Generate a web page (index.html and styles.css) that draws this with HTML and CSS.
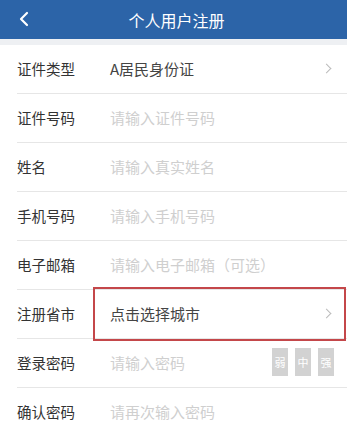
FILE: index.html
```html
<!DOCTYPE html>
<html lang="zh">
<head>
<meta charset="utf-8">
<link rel="stylesheet" href="styles.css">
</head>
<body>
<header class="bar">
  <svg class="back" width="12" height="16" viewBox="0 0 12 16"><path d="M9 2 L3 8 L9 14" fill="none" stroke="#fff" stroke-width="2.2" stroke-linecap="round" stroke-linejoin="round"/></svg>
  <h1 class="title">个人用户注册</h1>
</header>
<div class="strip"></div>
<main class="form">
  <div class="row"><span class="label">证件类型</span><span class="value">A居民身份证</span><span class="chev"></span></div>
  <div class="row"><span class="label">证件号码</span><span class="ph">请输入证件号码</span></div>
  <div class="row"><span class="label">姓名</span><span class="ph">请输入真实姓名</span></div>
  <div class="row"><span class="label">手机号码</span><span class="ph">请输入手机号码</span></div>
  <div class="row"><span class="label">电子邮箱</span><span class="ph">请输入电子邮箱（可选）</span></div>
  <div class="row"><span class="label">注册省市</span><span class="value">点击选择城市</span><span class="chev"></span><span class="mark"></span></div>
  <div class="row"><span class="label">登录密码</span><span class="ph">请输入密码</span><span class="lvls"><span class="lvl">弱</span><span class="lvl">中</span><span class="lvl">强</span></span></div>
  <div class="row"><span class="label">确认密码</span><span class="ph">请再次输入密码</span></div>
</main>
</body>
</html>
```
FILE: styles.css
```css
* { box-sizing: border-box; }
html, body { margin: 0; padding: 0; background: #fff; }
body {
  font-family: "Noto Sans CJK SC", "Noto Sans", sans-serif;
  width: 347px; height: 426px; overflow: hidden;
}
.bar {
  height: 39px; background: #2c64a8;
  display: flex; align-items: center; justify-content: center;
  position: relative;
}
.back { position: absolute; left: 18px; top: 11px; }
.title { margin: 0 0 0 6px; font-size: 16px; font-weight: 400; color: #fff; line-height: 1; }
.strip { height: 6px; background: #eef0f3; }
.form { padding-left: 17px; }
.row {
  height: 49px; border-bottom: 1px solid #e6e6e6;
  display: flex; align-items: center; position: relative;
  padding-bottom: 2px;
}
.label { width: 93px; font-size: 14.5px; color: #333; flex: none; }
.value { font-size: 15px; color: #444; flex: 1; }
.ph { font-size: 15px; color: #cfcfcf; flex: 1; }
.chev {
  width: 7px; height: 7px; border-top: 1.5px solid #bbb; border-right: 1.5px solid #bbb;
  transform: rotate(45deg); margin-right: 17px; flex: none;
}
.mark {
  position: absolute; left: 76px; right: 1px; top: -3px; bottom: -3px;
  border: 2.5px solid #c4474a; pointer-events: none;
}
.lvls { display: flex; gap: 7px; margin-right: 13px; }
.lvl {
  width: 16px; height: 28px; background: #d2d2d2; color: #fff;
  font-size: 11px; display: flex; align-items: center; justify-content: center;
}
```
